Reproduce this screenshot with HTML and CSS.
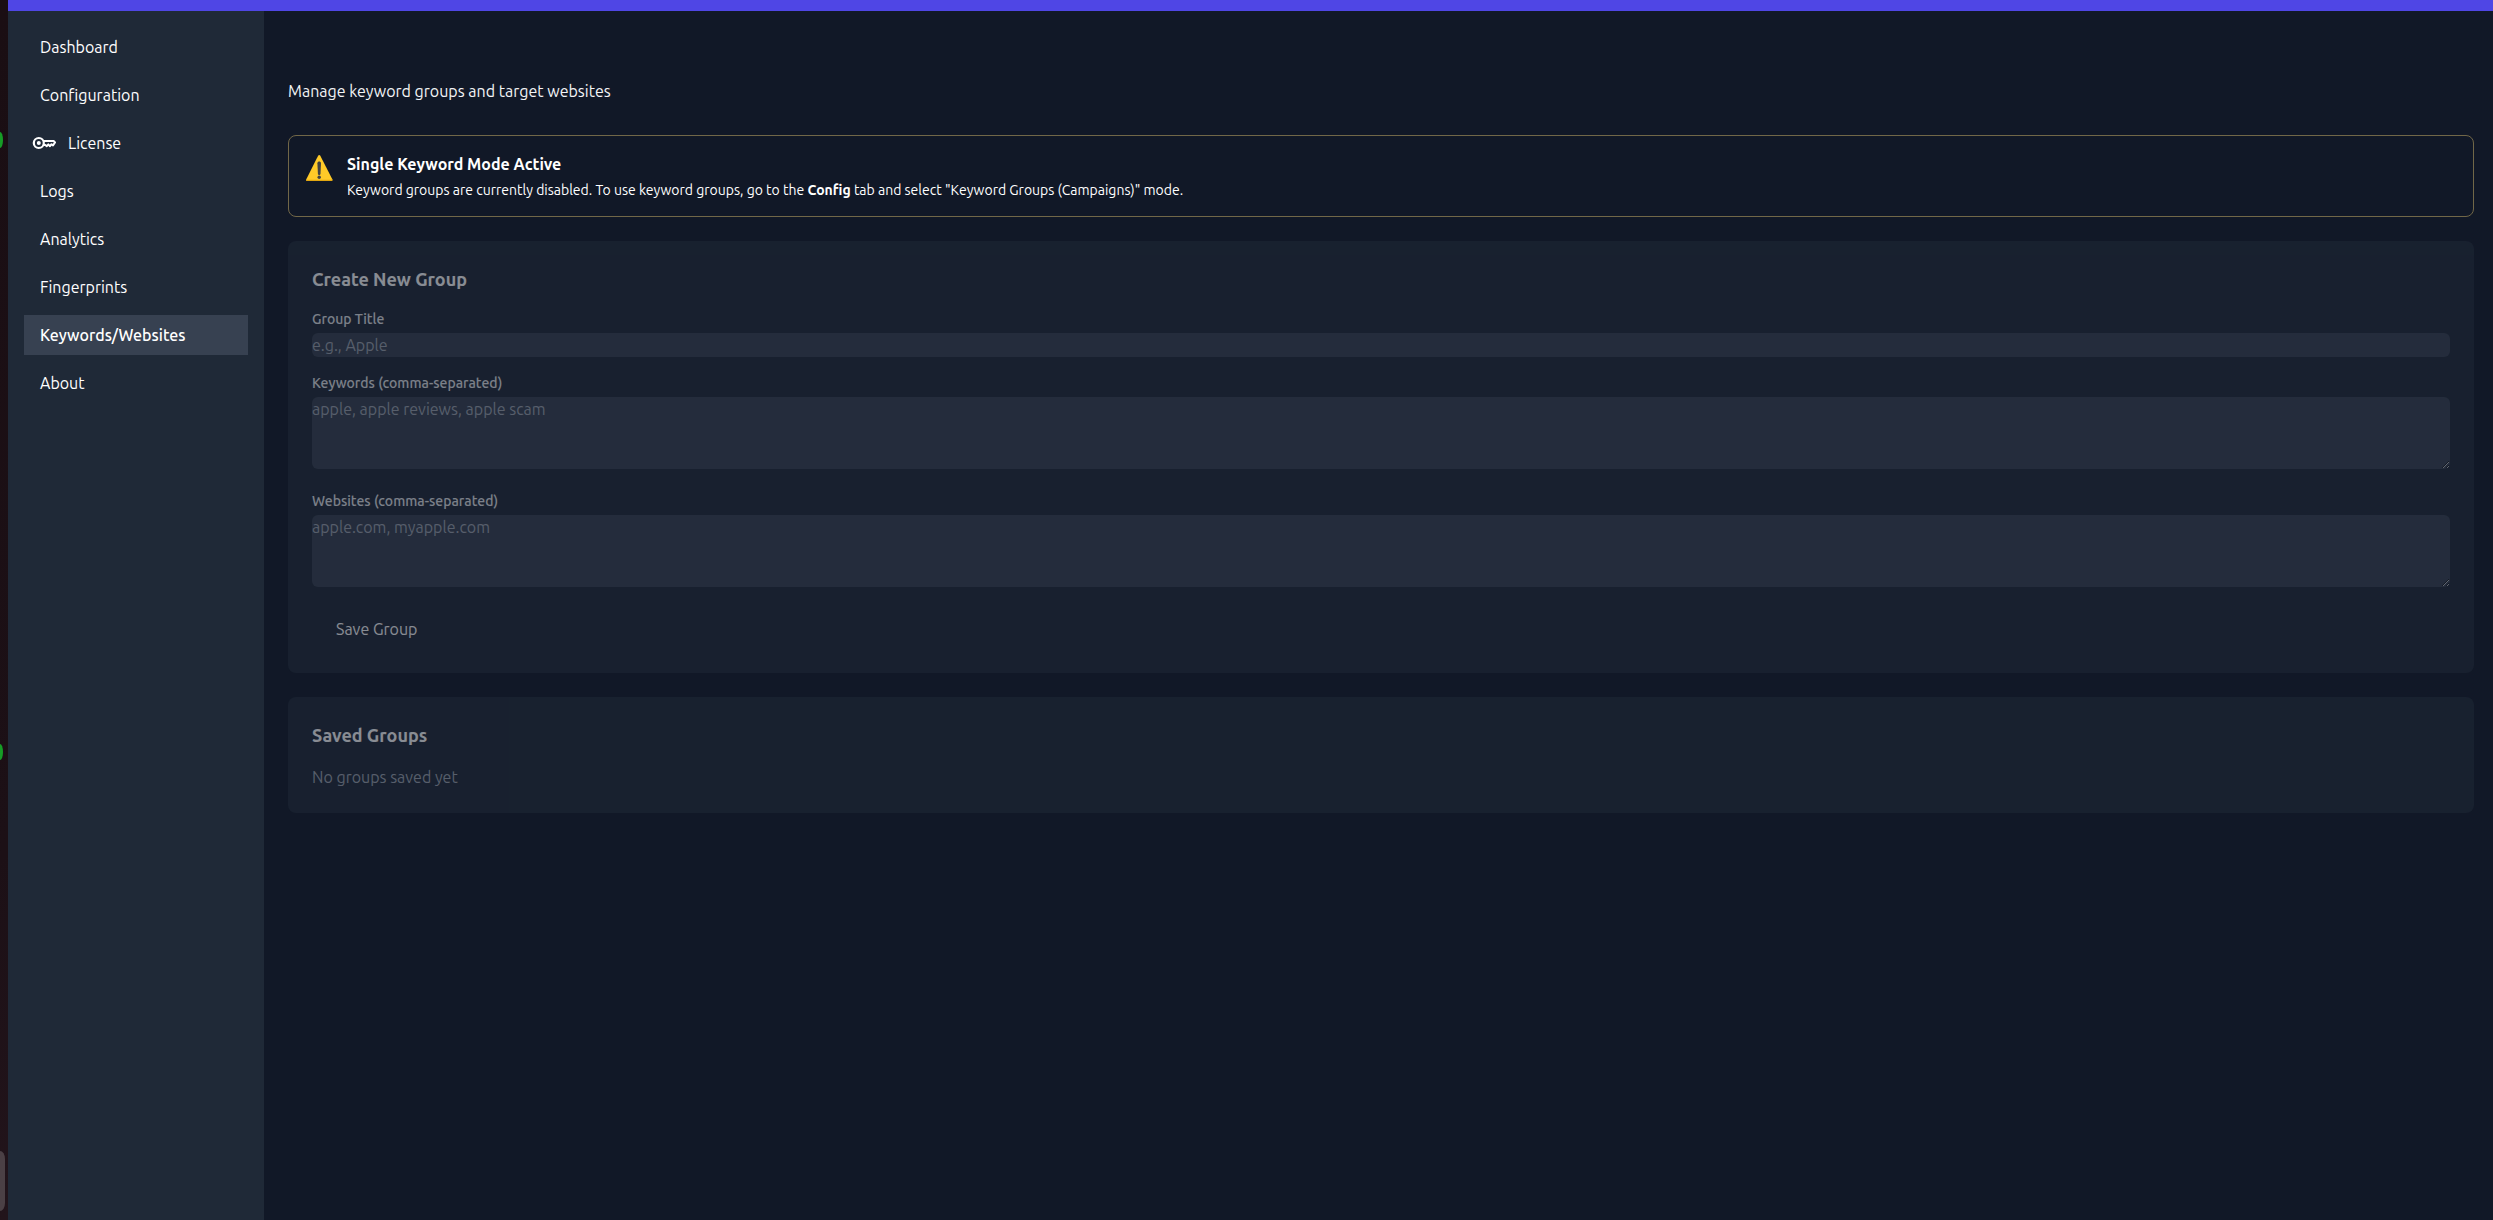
FILE: index.html
```html
<!DOCTYPE html>
<html lang="en">
<head>
  <meta charset="UTF-8" />
  <title>Keywords/Websites</title>
  <link rel="stylesheet" href="styles.css">
</head>
<body>
<div class="dock">
  <span class="dock-dot dot-top"></span>
  <span class="dock-dot dot-middle"></span>
  <span class="dock-tile"></span>
</div>

<div class="app">
  <header class="topbar"></header>
  <div class="layout">
    <nav class="sidebar">
      <a href="#dashboard" class="nav-item">Dashboard</a>
      <a href="#configuration" class="nav-item">Configuration</a>
      <a href="#license" class="nav-item with-icon">
        <svg class="key-icon" viewBox="0 0 24 24" width="24" height="24" fill="none" stroke="currentColor">
          <circle cx="6.8" cy="12" r="5" stroke-width="2.2"/>
          <circle cx="6.8" cy="12" r="2" fill="currentColor" stroke="none"/>
          <path d="M11 9.9h10.6l1.4 1.6-2 2.9-1.500-1.200-1.500 2-1.700-1.800-1.500 1.800-1.500-1.200h-2.500" stroke-width="2" stroke-linejoin="round"/>
        </svg>
        License
      </a>
      <a href="#logs" class="nav-item">Logs</a>
      <a href="#analytics" class="nav-item">Analytics</a>
      <a href="#fingerprints" class="nav-item">Fingerprints</a>
      <a href="#keywords" class="nav-item active">Keywords/Websites</a>
      <a href="#about" class="nav-item">About</a>
    </nav>

    <main class="content">
      <p class="intro">Manage keyword groups and target websites</p>

      <div class="notice">
        <svg class="warning-icon" viewBox="0 0 30 32" width="30" height="32">
          <path d="M13.100 3.700c.6-1 1.600-1 2.200 0L27.300 27.200c.5 1-.1 1.800-1.100 1.800H2.400c-1 0-1.600-.8-1.100-1.800z" fill="#ffca28"/>
          <path d="M1.300 27.200c-.5 1 .1 1.800 1.100 1.800h23.800c1 0 1.600-.8 1.100-1.800l-.4-.8c.2.900-.4 1.300-1.200 1.300H2.900c-.9 0-1.400-.5-1.200-1.300z" fill="#e2a610"/>
          <path d="M12.400 11.200c0-2.200 3.600-2.200 3.600 0l-.5 10.600c-.1 1.600-2.500 1.600-2.600 0z" fill="#424242"/>
          <circle cx="14.200" cy="25.300" r="1.700" fill="#424242"/>
        </svg>
        <div>
          <h2 class="notice-title">Single Keyword Mode Active</h2>
          <p class="notice-text">Keyword groups are currently disabled. To use keyword groups, go to the <strong>Config</strong> tab and select "Keyword Groups (Campaigns)" mode.</p>
        </div>
      </div>

      <form class="card">
        <h3 class="card-title">Create New Group</h3>
        <div class="field">
          <label for="groupTitle">Group Title</label>
          <input type="text" id="groupTitle" placeholder="e.g., Apple">
        </div>
        <div class="field">
          <label for="keywords">Keywords (comma-separated)</label>
          <textarea id="keywords" rows="3" placeholder="apple, apple reviews, apple scam"></textarea>
        </div>
        <div class="field">
          <label for="websites">Websites (comma-separated)</label>
          <textarea id="websites" rows="3" placeholder="apple.com, myapple.com"></textarea>
        </div>
        <button type="button" class="save-btn">Save Group</button>
      </form>

      <section class="card">
        <h3 class="card-title">Saved Groups</h3>
        <p class="empty">No groups saved yet</p>
      </section>
    </main>
  </div>
</div>
</body>
</html>
```
FILE: styles.css
```css
* {
    box-sizing: border-box;
    margin: 0;
}

body {
    display: flex;
    min-height: 100vh;
    font-family: Ubuntu, "Noto Sans", sans-serif;
    font-size: 16px;
    line-height: 24px;
    background-color: #111827;
    color: #fff;
}

/* slice of the desktop dock left of the window */
.dock {
    position: relative;
    width: 8px;
    flex-shrink: 0;
    background: linear-gradient(#1a0e13, #1c1016 70%, #22141b);
}

.dock-dot {
    position: absolute;
    left: 0;
    width: 3px;
    height: 16px;
    border-radius: 0 3px 3px 0 / 0 8px 8px 0;
    background-color: #169c26;
}

.dot-top {
    top: 132px;
}

.dot-middle {
    top: 744px;
}

.dock-tile {
    position: absolute;
    left: 0;
    bottom: 9px;
    width: 5px;
    height: 60px;
    border-radius: 0 5px 5px 0 / 0 8px 8px 0;
    background-color: #4b4045;
}

.app {
    flex: 1;
    display: flex;
    flex-direction: column;
}

.topbar {
    height: 11px;
    background-color: #4f46e5;
}

.layout {
    flex: 1;
    display: flex;
}

.sidebar {
    width: 256px;
    flex-shrink: 0;
    display: flex;
    flex-direction: column;
    gap: 8px;
    padding: 16px;
    background-color: #1f2937;
}

.nav-item {
    padding: 8px 16px;
    color: #fff;
    text-decoration: none;
}

.nav-item.active {
    background-color: #374151;
    font-weight: 500;
}

.with-icon {
    display: flex;
    align-items: center;
    gap: 12px;
    padding-left: 8px;
}

.content {
    flex: 1;
    display: flex;
    flex-direction: column;
    gap: 24px;
    padding: 68px 19px 24px 24px;
}

.intro {
    margin-bottom: 8px;
    color: #f3f4f6;
}

.notice {
    display: flex;
    gap: 12px;
    padding: 16px;
    border: 1px solid #716748;
    border-radius: 8px;
}

.notice-title {
    margin-bottom: 4px;
    font-size: 16px;
    line-height: 24px;
    font-weight: 700;
}

.notice-text {
    font-size: 14px;
    line-height: 20px;
}

.card {
    padding: 24px;
    border-radius: 8px;
    background-color: #1f2937;
    opacity: 0.5;
}

.card-title {
    margin-bottom: 16px;
    font-size: 18px;
    line-height: 28px;
    font-weight: 700;
}

.field {
    margin-bottom: 16px;
}

.field label {
    display: block;
    margin-bottom: 4px;
    font-size: 14px;
    line-height: 20px;
    font-weight: 500;
    color: #e5e7eb;
}

input, textarea {
    width: 100%;
    padding: 0;
    border: 0;
    border-radius: 6px;
    font: inherit;
    color: #fff;
    background-color: #374151;
}

input {
    display: block;
    height: 24px;
}

textarea {
    resize: vertical;
}

::placeholder {
    color: #9ca3af;
}

.save-btn {
    padding: 8px 24px;
    border: 0;
    font: inherit;
    color: #fff;
    background: none;
}

.empty {
    color: #9ca3af;
}
```
